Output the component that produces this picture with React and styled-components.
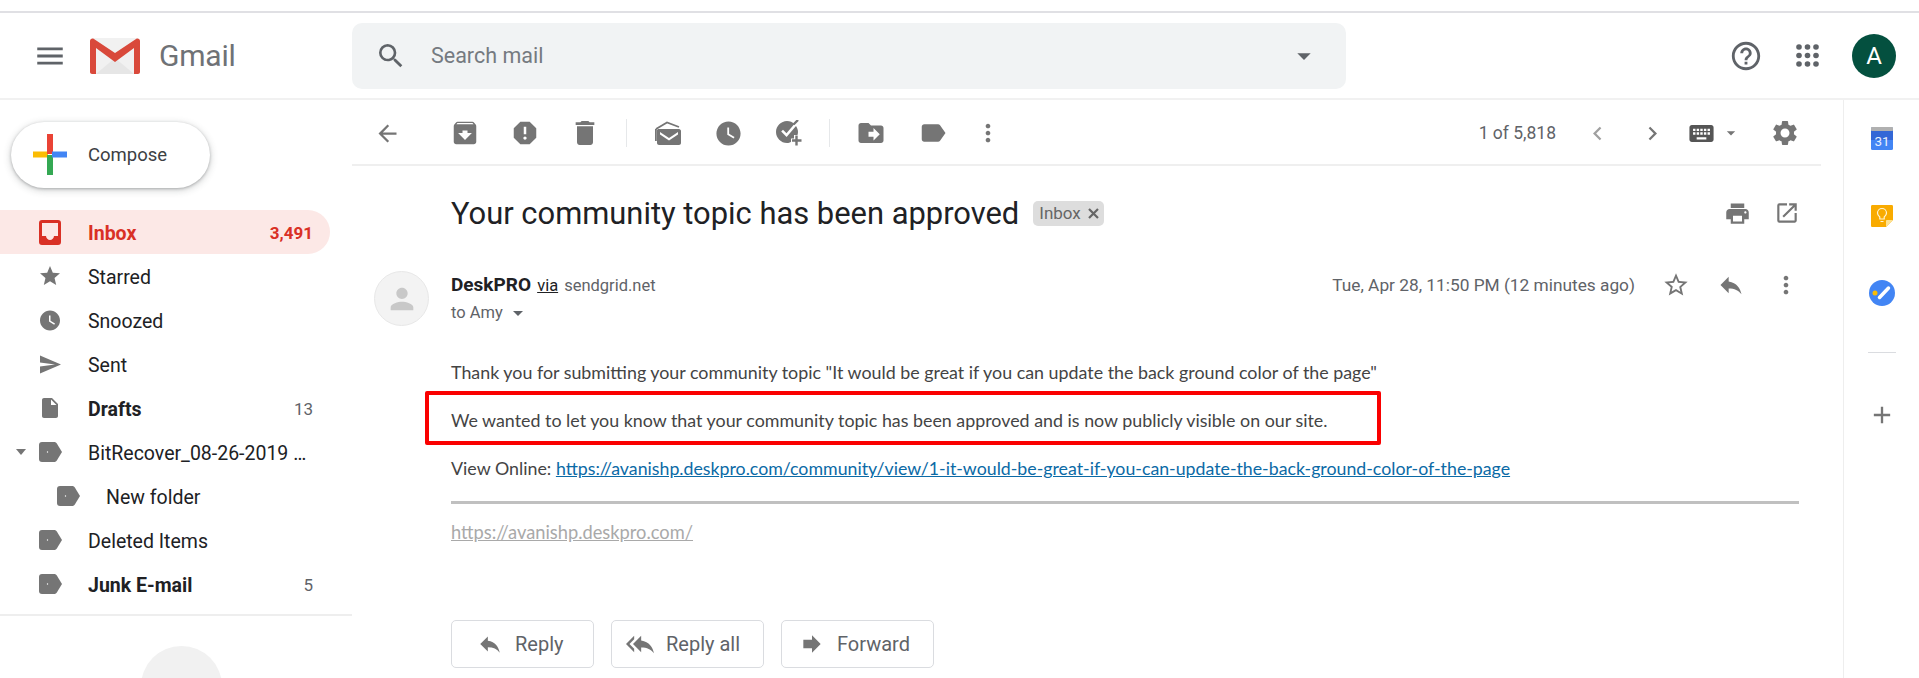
import React from 'react';
import styled, { createGlobalStyle } from 'styled-components';
import {
  MdSearch, MdArrowDropDown, MdHelpOutline, MdArrowBack, MdArchive, MdReport, MdDelete,
  MdWatchLater, MdDriveFileMove, MdLabel, MdMoreVert, MdChevronLeft, MdChevronRight, MdKeyboard, MdSettings,
  MdPrint, MdOpenInNew, MdStarBorder, MdReply, MdReplyAll, MdForward, MdStar, MdSend, MdInsertDriveFile,
  MdPerson, MdAdd, MdMenu,
} from 'react-icons/md';

const GlobalStyle = createGlobalStyle`
  html, body { margin: 0; padding: 0; background: #fff; overflow: hidden; }
  body { font-family: Roboto, "Liberation Sans", sans-serif; color: #202124; }
  * { box-sizing: border-box; }
`;

const Page = styled.div`
  width: 1919px;
  height: 678px;
  overflow: hidden;
  padding-top: 11px;
`;

const TopLine = styled.div`
  height: 2px;
  background: #e0e0e4;
`;

const Header = styled.header`
  height: 87px;
  display: flex;
  align-items: center;
  border-bottom: 2px solid #f1f1f1;
`;

const Brand = styled.div`
  width: 352px;
  display: flex;
  align-items: center;
  padding-left: 33px;
  color: #5f6368;
`;

const MenuSlot = styled.span`
  display: flex;
  margin-right: 23px;
`;

const Wordmark = styled.span`
  font-size: 30px;
  margin-left: 19px;
  color: #6f7276;
  letter-spacing: -0.2px;
`;

const SearchBox = styled.div`
  width: 994px;
  height: 66px;
  border-radius: 10px;
  background: #f1f3f4;
  display: flex;
  align-items: center;
  padding: 0 26px 0 23px;
  color: #5f6368;
`;

const SearchText = styled.span`
  flex: 1;
  font-size: 21.5px;
  margin-left: 24px;
  color: #757a80;
`;

const HeaderTools = styled.div`
  flex: 1;
  display: flex;
  align-items: center;
  justify-content: flex-end;
  padding-right: 23px;
  color: #5f6368;
  gap: 33px;
`;

const AccountBadge = styled.div`
  width: 44px;
  height: 44px;
  border-radius: 50%;
  background: #04503f;
  color: #fff;
  font-size: 24px;
  display: flex;
  align-items: center;
  justify-content: center;
`;

const Body = styled.div`
  display: flex;
  height: 578px;
`;

const Sidebar = styled.aside`
  width: 352px;
  flex: none;
  padding-top: 22px;
  overflow: hidden;
`;

const ComposeButton = styled.div`
  width: 199px;
  height: 66px;
  margin-left: 11px;
  padding: 0 0 1px 22px;
  border-radius: 33px;
  background: #fff;
  display: flex;
  align-items: center;
  gap: 21px;
  font-size: 18.5px;
  color: #3c4043;
  box-shadow: 0 1px 3px rgba(60, 64, 67, 0.35), 0 2px 6px 2px rgba(60, 64, 67, 0.15);
`;

const Nav = styled.nav`
  margin-top: 22px;
`;

const NavRow = styled.div`
  position: relative;
  width: 330px;
  height: 44px;
  display: flex;
  align-items: center;
  padding: 2px 17px 0 ${(p) => 38 + (p.$indent ? 18 : 0)}px;
  border-radius: 0 22px 22px 0;
  background: ${(p) => (p.$active ? '#fce8e6' : 'transparent')};
  color: ${(p) => (p.$active ? '#d93025' : '#202124')};
  font-weight: ${(p) => (p.$active || p.$bold ? 700 : 400)};
  font-size: 19.5px;
`;

const NavIcon = styled.span`
  width: 24px;
  height: 24px;
  flex: none;
  display: flex;
  align-items: center;
  justify-content: center;
  margin: -2px 26px 0 0;
  color: ${(p) => (p.$active ? '#d93025' : '#757575')};
`;

const NavLabel = styled.span`
  flex: 1;
  white-space: nowrap;
  overflow: hidden;
`;

const NavCount = styled.span`
  font-size: 17px;
  color: ${(p) => (p.$active ? '#d93025' : '#5f6368')};
  font-weight: ${(p) => (p.$active ? 700 : 400)};
`;

const Expander = styled.span`
  position: absolute;
  left: 16px;
  top: 19px;
  width: 0;
  height: 0;
  border-left: 5px solid transparent;
  border-right: 5px solid transparent;
  border-top: 6px solid #757575;
`;

const SidebarLine = styled.div`
  height: 2px;
  margin-top: 8px;
  background: #eeeeee;
`;

const Hangout = styled.div`
  width: 81px;
  height: 81px;
  margin: 30px 0 0 141px;
  border-radius: 50%;
  background: #f1f1f1;
`;

const Main = styled.main`
  width: 1491px;
  flex: none;
`;

const Toolbar = styled.div`
  width: 1469px;
  height: 66px;
  display: flex;
  align-items: center;
  padding: 2px 0 0 5px;
  border-bottom: 2px solid #efefef;
  color: #757575;
`;

const ToolSlot = styled.span`
  width: ${(p) => p.$w || 60}px;
  height: 40px;
  flex: none;
  display: flex;
  align-items: center;
  justify-content: center;
  margin-left: ${(p) => p.$ml || 0}px;
  color: ${(p) => p.$color || 'inherit'};
`;

const ToolDivider = styled.span`
  width: 1px;
  height: 28px;
  background: #e6e8ea;
  margin: 0 11px;
  flex: none;
`;

const Pager = styled.span`
  margin-left: auto;
  font-size: 17.5px;
  color: #5f6368;
  margin-right: 14px;
`;

const Pane = styled.div`
  padding-left: 99px;
`;

const SubjectRow = styled.div`
  height: 60px;
  margin-top: 17px;
  width: 1370px;
  display: flex;
  align-items: center;
  color: #757575;
`;

const Subject = styled.h1`
  margin: 0;
  font-size: 30.9px;
  font-weight: 400;
  color: #202124;
`;

const Chip = styled.span`
  margin-left: 14px;
  height: 25px;
  width: 71px;
  padding-left: 6px;
  border-radius: 5px;
  background: #dddddd;
  color: #666;
  font-size: 17px;
  display: flex;
  align-items: center;
  gap: 7px;
`;

const SubjectTools = styled.div`
  margin-left: auto;
  display: flex;
  align-items: center;
  gap: 23px;
  padding-right: 21px;
`;

const SenderRow = styled.div`
  position: relative;
  width: 1370px;
  margin-top: 28px;
  height: 56px;
  display: flex;
  justify-content: space-between;
`;

const Avatar = styled.div`
  position: absolute;
  left: -77px;
  top: 0;
  width: 55px;
  height: 55px;
  border-radius: 50%;
  background: #f3f3f3;
  border: 1px solid #e8e8e8;
  color: #c8c8c8;
  display: flex;
  align-items: center;
  justify-content: center;
`;

const SenderInfo = styled.div`
  font-size: 16.500px;
  line-height: 28px;
  color: #5f6368;
`;

const SenderName = styled.b`
  color: #202124;
  font-size: 19px;
`;

const Via = styled.u`
  color: #202124;
  margin: 0 6px 0 2px;
`;

const ToLine = styled.div`
  display: flex;
  align-items: center;
  height: 26px;
  & > svg { margin-left: 3px; }
`;

const SenderMeta = styled.div`
  display: flex;
  align-items: center;
  height: 28px;
  font-size: 17.300px;
  color: #5f6368;
  gap: 27px;
  padding-right: 21px;
  & > svg { color: #757575; }
`;

const Message = styled.div`
  margin-top: 21px;
  font-family: Lato, "Liberation Sans", sans-serif;
  font-size: 17.850px;
  color: #444;
`;

const MessageLine = styled.p`
  position: relative;
  margin: 0;
  height: 48px;
  line-height: 48px;
`;

const RedBox = styled.span`
  position: absolute;
  left: -26px;
  top: -5px;
  width: 956px;
  height: 54px;
  border: 4px solid #fa0000;
  border-radius: 2px;
`;

const MessageLink = styled.a`
  color: #0b6aa6;
  font-size: 17.750px;
  text-decoration: underline;
`;

const Rule = styled.hr`
  width: 1348px;
  height: 3px;
  margin: 9px 0 0;
  border: 0;
  background: #c0c0c0;
`;

const FooterLink = styled.a`
  display: block;
  margin-top: 16px;
  line-height: 24px;
  font-size: 18.300px;
  color: #a9a9a9;
  text-decoration: underline;
`;

const ReplyBar = styled.div`
  display: flex;
  gap: 17px;
  margin-top: 76px;
`;

const ReplyButton = styled.div`
  width: ${(p) => p.$w}px;
  height: 48px;
  border: 1px solid #dadce0;
  border-radius: 5px;
  display: flex;
  align-items: center;
  padding-left: ${(p) => p.$pad}px;
  gap: ${(p) => p.$gap}px;
  font-size: 20px;
  color: #5f6368;
  & > svg { color: #757575; }
`;

const Rail = styled.aside`
  flex: 1;
  border-left: 1px solid #eeeeee;
  display: flex;
  flex-direction: column;
  align-items: center;
`;

const RailSlot = styled.div`
  height: 77px;
  display: flex;
  align-items: center;
  justify-content: center;
`;

const RailLine = styled.div`
  width: 28px;
  height: 1px;
  background: #dadce0;
  margin-top: 21px;
`;

const RailAdd = styled.div`
  margin-top: 48px;
  color: #757575;
  display: flex;
`;

// drawings that the icon packages don't have
const GmailLogo = () => (
  <svg width="50" height="36" viewBox="0 0 50 36">
    <rect x="2" y="0" width="46" height="36" rx="2" fill="#f1f1f1" />
    <path d="M6 36 L25 20 L44 36Z" fill="#e6e6e6" />
    <path d="M0 3 C0 1 2 0 4 1 L25 15 L46 1 C48 0 50 1 50 3 V34 C50 35 49 36 48 36 H44 V10 L25 24 L6 10 V36 H2 C1 36 0 35 0 34Z" fill="#d9493b" />
  </svg>
);

const ColorPlus = () => (
  <svg width="34" height="41" viewBox="0 0 34 41">
    <rect x="0" y="17.500" width="15" height="6" fill="#fbbc04" />
    <rect x="14" y="0" width="6" height="20" fill="#ea4335" />
    <rect x="14" y="21" width="6" height="20" fill="#34a853" />
    <rect x="19" y="17.500" width="15" height="6" fill="#4285f4" />
  </svg>
);

const AppsIcon = () => (
  <svg width="23" height="23" viewBox="0 0 23 23" fill="currentColor">
    {[3, 11.500, 20].map((y) => [3, 11.500, 20].map((x) => <circle key={`${x}-${y}`} cx={x} cy={y} r="2.800" />))}
  </svg>
);

const ChipClose = () => (
  <svg width="11" height="11" viewBox="0 0 11 11">
    <path d="M1 1 L10 10 M10 1 L1 10" stroke="currentColor" strokeWidth="2.200" />
  </svg>
);

const InboxIcon = () => (
  <svg width="22" height="25" viewBox="0 0 22 25">
    <path d="M3 0 H19 C21 0 22 1 22 3 V22 C22 24 21 25 19 25 H3 C1 25 0 24 0 22 V3 C0 1 1 0 3 0Z M3 3 V16 H7 C7 18 9 20 11 20 C13 20 15 18 15 16 H19 V3Z" fill="currentColor" fillRule="evenodd" />
  </svg>
);

const LabelIcon = () => (
  <svg width="23" height="20" viewBox="0 0 23 20">
    <path d="M3 0 H15 C16 0 17 .5 17.500 1 L23 10 L17.500 19 C17 19.500 16 20 15 20 H3 C1 20 0 19 0 17 V3 C0 1 1 0 3 0Z" fill="currentColor" />
    <circle cx="8.500" cy="10" r=".7" fill="#fff" />
  </svg>
);

const UnreadIcon = () => (
  <svg width="26" height="24" viewBox="0 0 26 24">
    <path d="M1 8 L12 1.500 L24 6" fill="none" stroke="currentColor" strokeWidth="1.800" />
    <path d="M2 9 L3 8 H24 C25 8 26 9 26 10 V22 C26 23 25 24 24 24 H4 C3 24 2 23 2 22Z M5 11 L14 17 L23 11 L23 13.500 L14 19.500 L5 13.500Z" fill="currentColor" fillRule="evenodd" />
    <path d="M0 8 H1.800 V20 H0Z" fill="currentColor" />
  </svg>
);

const AddTaskIcon = () => (
  <svg width="28" height="26" viewBox="0 0 28 26" style={{ marginLeft: 4 }}>
    <path d="M11 1 C14 1 16.500 2 18.400 4 L10.500 13.200 L7 9.800 L5.200 11.600 L10.600 17 L20 6 C21 7.500 22 9.500 22 12 C22 13 21.800 14 21.500 15 H18 V18.500 H15 V22 C14 22.500 12.500 23 11 23 C5 23 0 18 0 12 C0 6 5 1 11 1Z" fill="currentColor" />
    <path d="M17.500 4.500 L22 0 M20.500 15.500 V25.500 M16 20.500 H25.500" stroke="currentColor" strokeWidth="2.400" fill="none" />
  </svg>
);

const CalendarIcon = () => (
  <svg width="22" height="23" viewBox="0 0 22 23">
    <rect x="0" y="0" width="22" height="23" rx="1.500" fill="#4285f4" />
    <rect x="0" y="4" width="22" height="9" fill="#3367d6" />
    <rect x="0" y="0" width="22" height="4" rx="1" fill="#b0b0b0" />
    <text x="11" y="18.500" fontSize="13.500" fontFamily="Roboto, sans-serif" textAnchor="middle" fill="#e8f0fe">31</text>
  </svg>
);

const KeepIcon = () => (
  <svg width="22" height="22" viewBox="0 0 22 22">
    <path d="M1.500 0 H20.500 C21.500 0 22 .5 22 1.500 V15 L15 22 H1.500 C.5 22 0 21.500 0 20.500 V1.500 C0 .5 .5 0 1.500 0Z" fill="#f9ab00" />
    <path d="M22 15 H16 C15.500 15 15 15.500 15 16 V22Z" fill="#fde293" />
    <path d="M11 3.500 C8.500 3.500 6.500 5.500 6.500 8 C6.500 10 7.500 11 8.800 12 V14 H13.200 V12 C14.500 11 15.500 10 15.500 8 C15.500 5.500 13.500 3.500 11 3.500Z M9.500 16.500 H12.500" fill="none" stroke="#fff5d6" strokeWidth="1.200" />
  </svg>
);

const TasksIcon = () => (
  <svg width="26" height="26" viewBox="0 0 26 26">
    <circle cx="13" cy="13" r="13" fill="#4285f4" />
    <circle cx="6" cy="13" r="2.500" fill="#fbbc04" />
    <path d="M10.500 17.500 L19.500 8" stroke="#fff" strokeWidth="3.500" strokeLinecap="round" />
  </svg>
);

const navItems = [
  { label: 'Inbox', count: '3,491', active: true, icon: <InboxIcon /> },
  { label: 'Starred', icon: <MdStar size={26} /> },
  { label: 'Snoozed', icon: <MdWatchLater size={27} /> },
  { label: 'Sent', icon: <MdSend size={27} /> },
  { label: 'Drafts', count: '13', bold: true, icon: <MdInsertDriveFile size={28} /> },
  { label: 'BitRecover_08-26-2019 …', expand: true, icon: <LabelIcon /> },
  { label: 'New folder', indent: true, icon: <LabelIcon /> },
  { label: 'Deleted Items', icon: <LabelIcon /> },
  { label: 'Junk E-mail', count: '5', bold: true, icon: <LabelIcon /> },
];

const App = () => (
  <Page>
    <GlobalStyle />
    <TopLine />
    <Header>
      <Brand>
        <MenuSlot><MdMenu size={34} /></MenuSlot>
        <GmailLogo />
        <Wordmark>Gmail</Wordmark>
      </Brand>
      <SearchBox>
        <MdSearch size={32} />
        <SearchText>Search mail</SearchText>
        <MdArrowDropDown size={32} />
      </SearchBox>
      <HeaderTools>
        <MdHelpOutline size={34} />
        <AppsIcon />
        <AccountBadge>A</AccountBadge>
      </HeaderTools>
    </Header>
    <Body>
      <Sidebar>
        <ComposeButton>
          <ColorPlus />
          Compose
        </ComposeButton>
        <Nav>
          {navItems.map((item) => (
            <NavRow key={item.label} $active={item.active} $bold={item.bold} $indent={item.indent}>
              {item.expand && <Expander />}
              <NavIcon $active={item.active}>{item.icon}</NavIcon>
              <NavLabel>{item.label}</NavLabel>
              {item.count && <NavCount $active={item.active}>{item.count}</NavCount>}
            </NavRow>
          ))}
        </Nav>
        <SidebarLine />
        <Hangout />
      </Sidebar>
      <Main>
        <Toolbar>
          <ToolSlot><MdArrowBack size={27} /></ToolSlot>
          <ToolSlot $ml={18}><MdArchive size={30} /></ToolSlot>
          <ToolSlot><MdReport size={30} /></ToolSlot>
          <ToolSlot><MdDelete size={32} /></ToolSlot>
          <ToolDivider />
          <ToolSlot><UnreadIcon /></ToolSlot>
          <ToolSlot><MdWatchLater size={29} /></ToolSlot>
          <ToolSlot><AddTaskIcon /></ToolSlot>
          <ToolDivider />
          <ToolSlot><MdDriveFileMove size={30} /></ToolSlot>
          <ToolSlot $w={64}><MdLabel size={30} /></ToolSlot>
          <ToolSlot $w={46}><MdMoreVert size={28} /></ToolSlot>
          <Pager>1 of 5,818</Pager>
          <ToolSlot $w={55} $color="#a0a0a0"><MdChevronLeft size={27} /></ToolSlot>
          <ToolSlot $w={54}><MdChevronRight size={27} /></ToolSlot>
          <ToolSlot $w={40} $ml={2} $color="#555"><MdKeyboard size={29} /></ToolSlot>
          <ToolSlot $w={20}><MdArrowDropDown size={24} /></ToolSlot>
          <ToolSlot $w={50} $ml={19}><MdSettings size={30} /></ToolSlot>
          <ToolSlot $w={11} />
        </Toolbar>
        <Pane>
          <SubjectRow>
            <Subject>Your community topic has been approved</Subject>
            <Chip>Inbox <ChipClose /></Chip>
            <SubjectTools>
              <MdPrint size={27} />
              <MdOpenInNew size={26} />
            </SubjectTools>
          </SubjectRow>
          <SenderRow>
            <Avatar><MdPerson size={34} /></Avatar>
            <SenderInfo>
              <SenderName>DeskPRO</SenderName> <Via>via</Via>sendgrid.net
              <ToLine>to Amy <MdArrowDropDown size={24} /></ToLine>
            </SenderInfo>
            <SenderMeta>
              Tue, Apr 28, 11:50 PM (12 minutes ago)
              <MdStarBorder size={28} />
              <MdReply size={28} />
              <MdMoreVert size={28} />
            </SenderMeta>
          </SenderRow>
          <Message>
            <MessageLine>Thank you for submitting your community topic "It would be great if you can update the back ground color of the page"</MessageLine>
            <MessageLine>
              We wanted to let you know that your community topic has been approved and is now publicly visible on our site.
              <RedBox />
            </MessageLine>
            <MessageLine>
              View Online: <MessageLink>https://avanishp.deskpro.com/community/view/1-it-would-be-great-if-you-can-update-the-back-ground-color-of-the-page</MessageLink>
            </MessageLine>
            <Rule />
            <FooterLink>https://avanishp.deskpro.com/</FooterLink>
          </Message>
          <ReplyBar>
            <ReplyButton $w={143} $pad={25} $gap={12}><MdReply size={26} />Reply</ReplyButton>
            <ReplyButton $w={153} $pad={14} $gap={12}><MdReplyAll size={28} />Reply all</ReplyButton>
            <ReplyButton $w={153} $pad={17} $gap={12}><MdForward size={26} />Forward</ReplyButton>
          </ReplyBar>
        </Pane>
      </Main>
      <Rail>
        <RailSlot><CalendarIcon /></RailSlot>
        <RailSlot><KeepIcon /></RailSlot>
        <RailSlot><TasksIcon /></RailSlot>
        <RailLine />
        <RailAdd><MdAdd size={28} /></RailAdd>
      </Rail>
    </Body>
  </Page>
);

export default App;
